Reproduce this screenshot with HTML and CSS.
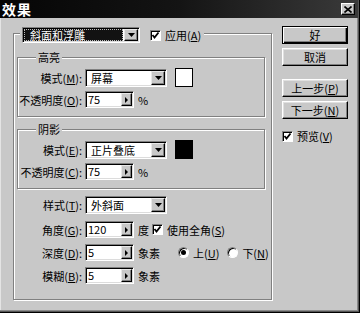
FILE: index.html
```html
<!DOCTYPE html>
<html lang="zh-CN">
<head>
<meta charset="utf-8">
<title>效果</title>
<link rel="stylesheet" href="styles.css">
</head>
<body>
<div class="window">
  <div class="titlebar">
    <span class="title">效果</span>
    <span class="close"><svg width="8" height="7" viewBox="0 0 8 7"><path d="M0.5 0.5 L7.5 6.5 M7.5 0.5 L0.5 6.5" stroke="#000" stroke-width="1.6"/></svg></span>
  </div>
  <div class="body">
    <div class="group outer">
      <div class="legend outer-legend">
        <div class="select dark">
          <span class="val">斜面和浮雕</span>
          <span class="arrow"><svg width="7" height="4" viewBox="0 0 7 4"><path d="M0 0 H7 L3.5 4 Z" fill="#000"/></svg></span>
        </div>
        <span class="cb checked"><svg width="9" height="9" viewBox="0 0 9 9"><path d="M1.5 4 L3.5 6.5 L7.5 1.5" fill="none" stroke="#000" stroke-width="1.8"/></svg></span>
        <span class="cb-label">应用(<u>A</u>)</span>
      </div>

      <div class="group sub">
        <div class="legend sub-legend">高亮</div>
        <div class="row first">
          <span class="label">模式(<u>M</u>):</span>
          <div class="select">
            <span class="val">屏幕</span>
            <span class="arrow"><svg width="7" height="4" viewBox="0 0 7 4"><path d="M0 0 H7 L3.5 4 Z" fill="#000"/></svg></span>
          </div>
          <span class="swatch white"></span>
        </div>
        <div class="row second">
          <span class="label">不透明度(<u>O</u>):</span>
          <div class="field">
            <span class="txt">75</span>
            <span class="spin"><svg width="3" height="6" viewBox="0 0 3 6"><path d="M0 0 L3 3 L0 6 Z" fill="#000"/></svg></span>
          </div>
          <span class="unit">%</span>
        </div>
      </div>

      <div class="group sub shadow">
        <div class="legend sub-legend">阴影</div>
        <div class="row first">
          <span class="label">模式(<u>E</u>):</span>
          <div class="select">
            <span class="val">正片叠底</span>
            <span class="arrow"><svg width="7" height="4" viewBox="0 0 7 4"><path d="M0 0 H7 L3.5 4 Z" fill="#000"/></svg></span>
          </div>
          <span class="swatch black"></span>
        </div>
        <div class="row second">
          <span class="label">不透明度(<u>C</u>):</span>
          <div class="field">
            <span class="txt">75</span>
            <span class="spin"><svg width="3" height="6" viewBox="0 0 3 6"><path d="M0 0 L3 3 L0 6 Z" fill="#000"/></svg></span>
          </div>
          <span class="unit">%</span>
        </div>
      </div>

      <div class="lower">
        <div class="row style-row">
          <span class="label">样式(<u>T</u>):</span>
          <div class="select">
            <span class="val">外斜面</span>
            <span class="arrow"><svg width="7" height="4" viewBox="0 0 7 4"><path d="M0 0 H7 L3.5 4 Z" fill="#000"/></svg></span>
          </div>
        </div>
        <div class="row angle-row">
          <span class="label">角度(<u>G</u>):</span>
          <div class="field">
            <span class="txt">120</span>
            <span class="spin"><svg width="3" height="6" viewBox="0 0 3 6"><path d="M0 0 L3 3 L0 6 Z" fill="#000"/></svg></span>
          </div>
          <span class="unit">度</span>
          <span class="cb checked tight"><svg width="9" height="9" viewBox="0 0 9 9"><path d="M1.5 4 L3.5 6.5 L7.5 1.5" fill="none" stroke="#000" stroke-width="1.8"/></svg></span>
          <span class="cb-label">使用全角(<u>S</u>)</span>
        </div>
        <div class="row depth-row">
          <span class="label">深度(<u>D</u>):</span>
          <div class="field">
            <span class="txt">5</span>
            <span class="spin"><svg width="3" height="6" viewBox="0 0 3 6"><path d="M0 0 L3 3 L0 6 Z" fill="#000"/></svg></span>
          </div>
          <span class="unit">象素</span>
          <span class="radio on first-radio"></span>
          <span class="radio-label">上(<u>U</u>)</span>
          <span class="radio"></span>
          <span class="radio-label">下(<u>N</u>)</span>
        </div>
        <div class="row blur-row">
          <span class="label">模糊(<u>B</u>):</span>
          <div class="field">
            <span class="txt">5</span>
            <span class="spin"><svg width="3" height="6" viewBox="0 0 3 6"><path d="M0 0 L3 3 L0 6 Z" fill="#000"/></svg></span>
          </div>
          <span class="unit">象素</span>
        </div>
      </div>
    </div>

    <div class="side">
      <div class="btn default">好</div>
      <div class="btn">取消</div>
      <div class="btn gap">上一步(<u>P</u>)</div>
      <div class="btn">下一步(<u>N</u>)</div>
      <div class="preview">
        <span class="cb checked"><svg width="9" height="9" viewBox="0 0 9 9"><path d="M1.5 4 L3.5 6.5 L7.5 1.5" fill="none" stroke="#000" stroke-width="1.8"/></svg></span>
        <span class="cb-label">预览(<u>V</u>)</span>
      </div>
    </div>
  </div>
</div>
</body>
</html>
```

FILE: styles.css
```css
* { box-sizing: border-box; }
html, body { margin: 0; padding: 0; }
body {
  width: 360px;
  height: 313px;
  overflow: hidden;
  background: #c8c8c8;
  font-family: "Noto Sans CJK SC", "Noto Sans", sans-serif;
  font-size: 11px;
  color: #000;
}
u { text-decoration: underline; text-underline-offset: 1px; }

.window {
  width: 360px;
  height: 313px;
  background: #c8c8c8;
  display: flex;
  flex-direction: column;
  box-shadow: inset -1px -1px 0 #000, inset -2px -2px 0 #555, inset -3px -3px 0 #8a8a8a, inset 1px 0 0 #e4e4e4;
}

.titlebar {
  height: 18px;
  margin-right: 2px;
  background: linear-gradient(to right, #050505 0%, #141414 50%, #3a3a3a 100%);
  display: flex;
  align-items: center;
  justify-content: space-between;
  padding: 0 3px 0 2px;
}
.title {
  color: #fff;
  font-size: 14px;
  font-weight: bold;
  line-height: 16px;
  height: 16px;
  letter-spacing: 1px;
}
.close {
  width: 14px;
  height: 12px;
  background: #c8c8c8;
  border: 1px solid;
  border-color: #fff #000 #000 #fff;
  box-shadow: inset -1px -1px 0 #808080;
  display: flex;
  align-items: center;
  justify-content: center;
}

.body {
  flex: 1;
  display: flex;
  padding: 8px 0 0 13px;
}

.group {
  border: 1px solid #808080;
  box-shadow: 1px 1px 0 #fff, inset 1px 1px 0 #fff;
  display: flex;
  flex-direction: column;
}
.outer {
  width: 259px;
  height: 267px;
  margin-top: 7px;
}
.legend {
  align-self: flex-start;
  margin-top: -7px;
  background: #c8c8c8;
  display: flex;
  align-items: center;
}
.outer-legend {
  height: 16px;
  margin-left: 6px;
  padding: 0 3px 0 2px;
}
.outer-legend .select { width: 118px; height: 16px; }
.outer-legend .cb { margin-left: 10px; }

.sub {
  height: 60px;
  margin: 14px 6px 0 3px;
}
.sub.shadow { margin-top: 12px; }
.sub-legend {
  height: 12px;
  line-height: 12px;
  margin-left: 18px;
  padding: 0 2px;
}

.row {
  display: flex;
  align-items: center;
}
.sub .label { width: 64px; }
.lower .label { width: 68px; }
.label {
  text-align: right;
  margin-right: 3px;
  white-space: nowrap;
}
.sub .row.first { height: 19px; margin-top: 5px; }
.sub .row.second { height: 17px; margin-top: 4px; }

.lower { display: flex; flex-direction: column; }
.style-row { height: 18px; margin-top: 7px; }
.angle-row { height: 17px; margin-top: 7px; }
.depth-row { height: 17px; margin-top: 6px; }
.blur-row { height: 17px; margin-top: 6px; }

.select {
  width: 82px;
  height: 18px;
  background: #fff;
  border: 1px solid;
  border-color: #808080 #fff #fff #808080;
  box-shadow: inset 1px 1px 0 #000, inset -1px -1px 0 #dcdcdc;
  display: flex;
  padding: 1px;
}
.select .val {
  flex: 1;
  padding-left: 4px;
  display: flex;
  align-items: center;
  white-space: nowrap;
}
.select.dark .val {
  background: #121212;
  color: #fff;
  outline: 1px dotted #bbb;
  outline-offset: -1px;
  padding-left: 6px;
  margin-right: 1px;
}
.arrow {
  width: 14px;
  background: #c8c8c8;
  border: 1px solid;
  border-color: #e8e8e8 #000 #000 #e8e8e8;
  box-shadow: inset -1px -1px 0 #808080;
  display: flex;
  align-items: center;
  justify-content: center;
}

.swatch {
  width: 18px;
  height: 19px;
  margin-left: 8px;
  border: 1px solid #000;
}
.swatch.white { background: #fff; }
.swatch.black { background: #000; }

.field {
  width: 49px;
  height: 17px;
  background: #fff;
  border: 1px solid;
  border-color: #808080 #fff #fff #808080;
  box-shadow: inset 1px 1px 0 #000, inset -1px -1px 0 #dcdcdc;
  display: flex;
  padding: 1px;
}
.field .txt {
  flex: 1;
  padding-left: 1px;
  line-height: 13px;
}
.spin {
  width: 11px;
  background: #c8c8c8;
  border: 1px solid;
  border-color: #e8e8e8 #000 #000 #e8e8e8;
  box-shadow: inset -1px -1px 0 #808080;
  display: flex;
  align-items: center;
  justify-content: center;
}
.unit { margin-left: 4px; white-space: nowrap; }

.cb {
  width: 11px;
  height: 11px;
  background: #fff;
  border: 1px solid;
  border-color: #808080 #fff #fff #808080;
  box-shadow: inset 1px 1px 0 #000;
  display: flex;
  align-items: center;
  justify-content: center;
  flex: none;
}
.cb.tight { margin-left: 3px; }
.cb-label { margin-left: 4px; white-space: nowrap; }

.radio {
  width: 11px;
  height: 11px;
  border-radius: 50%;
  background: #fff;
  border: 1px solid;
  border-color: #808080 #fff #fff #808080;
  box-shadow: inset 1px 1px 0 #000;
  margin-left: 8px;
  position: relative;
  flex: none;
}
.radio.first-radio { margin-left: 18px; }
.radio.on::after {
  content: "";
  position: absolute;
  left: 2px;
  top: 2px;
  width: 5px;
  height: 5px;
  border-radius: 50%;
  background: #000;
}
.radio-label { margin-left: 4px; white-space: nowrap; }

.side {
  width: 66px;
  margin-left: 10px;
  display: flex;
  flex-direction: column;
}
.btn {
  width: 66px;
  height: 18px;
  margin-top: 4px;
  display: flex;
  align-items: center;
  justify-content: center;
  border: 1px solid;
  border-color: #fff #000 #000 #fff;
  box-shadow: inset -1px -1px 0 #808080, inset 1px 1px 0 #e0e0e0;
  white-space: nowrap;
}
.btn.default {
  margin-top: 0;
  border-color: #000;
  box-shadow: inset 1px 1px 0 #fff, inset -1px -1px 0 #000, inset -2px -2px 0 #808080;
}
.btn.gap { margin-top: 13px; }
.preview {
  display: flex;
  align-items: center;
  margin-top: 11px;
  height: 12px;
}
```
